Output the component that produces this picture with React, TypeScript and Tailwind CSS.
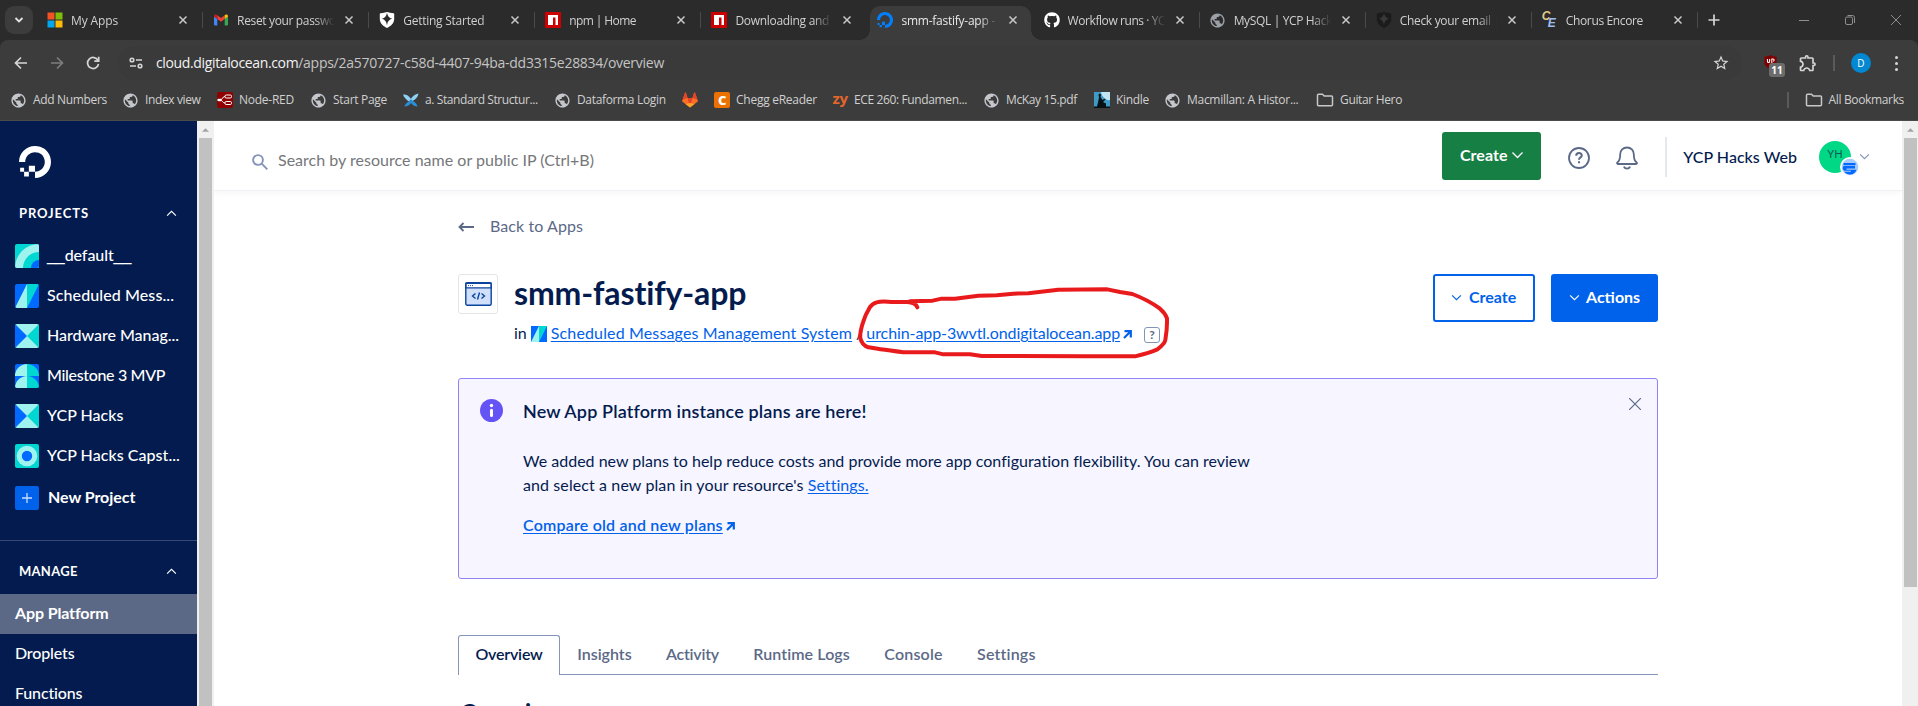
import type { ReactNode } from "react";
import { MdPublic, MdStarBorder, MdOutlineExtension } from "react-icons/md";
import { SiDigitalocean } from "react-icons/si";
import { FaGithub } from "react-icons/fa";

/* ---------- browser icons ---------- */

const Globe = ({ className = "text-[#c4c7cc]" }: { className?: string }) => (
  <MdPublic className={`-ml-px size-[17px] shrink-0 ${className}`} />
);

const Microsoft = () => (
  <svg viewBox="0 0 16 16" className="size-4">
    <path fill="#f35325" d="M0.5 0.5h7v7h-7z" />
    <path fill="#81bc06" d="M8.5 0.5h7v7h-7z" />
    <path fill="#05a6f0" d="M0.5 8.5h7v7h-7z" />
    <path fill="#ffba08" d="M8.5 8.5h7v7h-7z" />
  </svg>
);

const Gmail = () => (
  <svg viewBox="0 0 16 16" className="size-4">
    <path fill="#4285f4" d="M1 4.5 4.3 7v6.5H2A1 1 0 0 1 1 12.500z" />
    <path fill="#34a853" d="M15 4.500 11.700 7v6.500H14a1 1 0 0 0 1-1z" />
    <path fill="#ea4335" d="M4.300 3.300 8 6.100l3.700-2.800V7L8 9.800 4.300 7z" />
    <path fill="#c5221f" d="M1 4v.700L4.300 7V3.300l-.700-.500C2.500 2 1 2.700 1 4z" />
    <path fill="#fbbc04" d="M15 4v.700L11.700 7V3.300l.700-.500C13.500 2 15 2.700 15 4z" />
  </svg>
);

const Shield = ({ dim = false }: { dim?: boolean }) => (
  <svg viewBox="0 0 16 16" className="size-4">
    <path fill={dim ? "#1b1b1b" : "#ffffff"} d="M1.500 1.200C4 1.200 6.500.500 8 .100c1.500.400 4 1.100 6.500 1.100.500 0 .700.300.700.700V7c0 4-3.200 7.200-7.200 8.900C4 14.200.800 11 .800 7V1.900c0-.400.200-.700.700-.700z" />
    <path fill={dim ? "#383838" : "#2b2b2b"} d="M8 .800c.600 3.500 2 5.200 5.300 5.900C10 7.500 8.600 9.300 8 13.600 7.400 9.300 6 7.500 2.700 6.700 6 6 7.400 4.300 8 .800z" />
  </svg>
);

const Npm = () => (
  <svg viewBox="0 0 16 16" className="size-4">
    <path fill="#cc0000" d="M0 0h16v16H0z" />
    <path fill="#ffffff" d="M3 3h10v10h-2.500V5.500H8V13H3z" />
  </svg>
);

const Chorus = () => (
  <span className="relative size-4 font-['Liberation_Sans',sans-serif] text-[12px] leading-none font-bold italic">
    <span className="absolute -top-0.5 left-0 text-[#e3c98a]">C</span>
    <span className="absolute top-[5px] left-[6px] text-[#9dbdf2]">E</span>
  </span>
);

const Gitlab = () => (
  <svg viewBox="0 0 16 16" className="size-4">
    <path fill="#fc6d26" d="M8 15.500.500 9.800a1 1 0 0 1-.300-1.100L3 .800c.200-.500.700-.500.900 0L5.600 6h4.800L12.100.800c.200-.500.700-.500.900 0l2.800 7.900c.100.400 0 .900-.300 1.100z" />
    <path fill="#e24329" d="M8 15.500 5.600 6h4.800zM.600 7.400 3 .800c.200-.500.700-.500.900 0L5.600 6zM15.400 7.400 13 .800c-.200-.500-.700-.500-.9 0L10.400 6z" />
    <path fill="#fca326" d="M8 15.500 3.500 12 8 11l4.500 1z" />
  </svg>
);

const Chegg = () => (
  <span className="flex size-4 items-center justify-center rounded-[2px] bg-[#eb7100] font-['Open_Sans',sans-serif] text-[13px] leading-none font-extrabold text-white">
    C
  </span>
);

const Zy = () => (
  <span className="flex size-4 items-center justify-center pb-1 font-['Open_Sans',sans-serif] text-[15px] leading-none font-bold tracking-[-0.5px] text-[#e2662a]">
    zy
  </span>
);

const Kindle = () => (
  <svg viewBox="0 0 16 16" className="size-4">
    <path fill="#3d9bc6" d="M0 0h16v16H0z" />
    <path fill="#bfe5f2" d="M7 0h9v8C12 9 8 5 7 0z" />
    <path fill="#071013" d="M0 14.500h3l1-4 1-5L4.500 3C4.700 1.300 7 1.300 7 3l-.500 2 2 3L11 6.500l.500 1L9 10l3 1.500v3h4V16H0z" />
  </svg>
);

const Butterfly = () => (
  <svg viewBox="0 0 16 16" className="size-4">
    <path fill="#8fd0f5" d="M0 2.500c3-.500 5.500 1 8 4.300C10 4 12 2 15.500 1.500 15 5 12.500 7.500 9.500 9L8 7.500 6 9.500C3.500 8 1 5.500 0 2.500z" />
    <path fill="#2a8fd8" d="M8 7.500 10 9c2 1 4 3 4.500 5.500-3 0-5-1.500-6.500-3.500-1.500 2-3.500 3.500-6.500 3.500C2 12 4 10.500 6 9.500z" />
  </svg>
);

const Folder = () => (
  <svg viewBox="0 0 18 16" className="h-4 w-[18px] shrink-0" fill="none" stroke="#c7c7c7" strokeWidth="1.500">
    <path d="M1.500 3.200c0-.600.400-1 1-1h4l1.700 1.900h7.300c.600 0 1 .400 1 1v7.700c0 .600-.400 1-1 1h-13c-.600 0-1-.400-1-1z" />
  </svg>
);

const NodeRed = () => (
  <span className="flex size-4 items-center justify-center rounded-[2px] bg-[#8f0000]">
    <svg viewBox="0 0 16 16" className="size-4" fill="none" stroke="#ffffff" strokeWidth="1">
      <rect x="8" y="3" width="6.500" height="3" rx="1.200" />
      <rect x="8" y="9.500" width="6.500" height="3" rx="1.200" />
      <path d="M0 8h3c3 0 2-3.500 5-3.500M3 8c3 0 2 3 5 3" />
      <rect x="1" y="6.800" width="3.500" height="2.400" fill="#ffffff" stroke="none" />
    </svg>
  </span>
);

const Close = () => (
  <svg viewBox="0 0 10 10" className="size-[10px]" fill="none" stroke="#c9c9c9" strokeWidth="1.500">
    <path d="m1.500 1.500 7 7m0-7-7 7" />
  </svg>
);

/* ---------- browser chrome ---------- */

type TabInfo = { icon: ReactNode; title: string; tracking: string; divider?: boolean; active?: boolean };

const browserTabs: TabInfo[] = [
  { icon: <Microsoft />, title: "My Apps", tracking: "tracking-[-0.13px]", divider: true },
  { icon: <Gmail />, title: "Reset your passwo", tracking: "tracking-[-0.35px]", divider: true },
  { icon: <Shield />, title: "Getting Started", tracking: "tracking-[-0.25px]", divider: true },
  { icon: <Npm />, title: "npm | Home", tracking: "tracking-[-0.6px]", divider: true },
  { icon: <Npm />, title: "Downloading and", tracking: "tracking-[-0.3px]" },
  { icon: <SiDigitalocean className="size-4 text-[#0080ff]" />, title: "smm-fastify-app -", tracking: "tracking-[-0.25px]", active: true },
  { icon: <FaGithub className="size-4 text-white" />, title: "Workflow runs · YC", tracking: "tracking-[-0.42px]", divider: true },
  { icon: <Globe className="text-[#9aa0a6]" />, title: "MySQL | YCP Hack", tracking: "tracking-[-0.35px]", divider: true },
  { icon: <Shield dim />, title: "Check your email |", tracking: "tracking-[-0.32px]", divider: true },
  { icon: <Chorus />, title: "Chorus Encore", tracking: "tracking-[-0.37px]", divider: true },
];

function BrowserTab({ icon, title, tracking, divider, active }: TabInfo) {
  return (
    <div className="relative flex h-10 w-[166.1px] shrink-0 items-center pl-[10px]">
      {active && (
        <div className="absolute inset-x-[3px] top-[6px] bottom-0 rounded-t-[10px] bg-[#3c3c3c]">
          <span className="absolute bottom-0 -left-[10px] size-[10px] bg-[radial-gradient(circle_at_0_0,#2b2b2b_9.500px,#3c3c3c_10px)]" />
          <span className="absolute -right-[10px] bottom-0 size-[10px] bg-[radial-gradient(circle_at_100%_0,#2b2b2b_9.500px,#3c3c3c_10px)]" />
        </div>
      )}
      <span className="relative flex w-4 shrink-0">{icon}</span>
      <span className={`relative mt-px ml-2 w-[101px] whitespace-nowrap leading-4 [mask-image:linear-gradient(to_right,#000_78px,transparent_97px)] ${tracking} ${active ? "text-[#e8e8e8]" : "text-[#d0d0d0]"}`}>
        {title}
      </span>
      <span className="relative ml-[6px]">
        <Close />
      </span>
      {divider && <span className="ml-auto h-4 w-px bg-[#4a4a4a]" />}
    </div>
  );
}

type Bookmark = { icon: ReactNode; label?: string; cls: string };

const bookmarks: Bookmark[] = [
  { icon: <Globe />, label: "Add Numbers", cls: "w-[112px] tracking-[-0.33px]" },
  { icon: <Globe />, label: "Index view", cls: "w-[94px] tracking-[-0.37px]" },
  { icon: <NodeRed />, label: "Node-RED", cls: "w-[94px] tracking-[-0.25px]" },
  { icon: <Globe />, label: "Start Page", cls: "w-[92px] tracking-[-0.3px]" },
  { icon: <Butterfly />, label: "a. Standard Structur...", cls: "w-[152px] tracking-[-0.41px]" },
  { icon: <Globe />, label: "Dataforma Login", cls: "w-[127px] tracking-[-0.34px]" },
  { icon: <Gitlab />, cls: "w-[32px]" },
  { icon: <Chegg />, label: "Chegg eReader", cls: "w-[118px] tracking-[-0.26px]" },
  { icon: <Zy />, label: "ECE 260: Fundamen...", cls: "w-[152px] tracking-[-0.37px]" },
  { icon: <Globe />, label: "McKay 15.pdf", cls: "w-[110px] tracking-[-0.36px]" },
  { icon: <Kindle />, label: "Kindle", cls: "w-[71px] tracking-[-0.31px]" },
  { icon: <Globe />, label: "Macmillan: A Histor...", cls: "w-[151px] tracking-[-0.29px]" },
];

function BrowserChrome() {
  return (
    <div className="bg-[#2b2b2b] font-['Open_Sans','Noto_Sans',sans-serif] text-[12px] text-[#d0d0d0]">
      <div className="flex h-10 items-center">
        <div className="mr-1 ml-[5px] flex h-7 w-7 items-center justify-center rounded-[9px] bg-[#3c3c3c]">
          <svg viewBox="0 0 10 6" className="h-[6px] w-[10px]" fill="none" stroke="#e3e3e3" strokeWidth="1.800">
            <path d="m1.500 1 3.500 3.500L8.500 1" />
          </svg>
        </div>
        {browserTabs.map((t) => (
          <BrowserTab key={t.title} {...t} />
        ))}
        <svg viewBox="0 0 12 12" className="ml-[10px] size-3" fill="none" stroke="#d6d6d6" strokeWidth="1.700">
          <path d="M6 .500v11M.500 6h11" />
        </svg>
        <div className="mr-[17px] ml-auto flex items-center gap-9">
          <svg viewBox="0 0 10 10" className="size-[10px]" stroke="#8f8f8f">
            <path d="M0 5.500h10" />
          </svg>
          <svg viewBox="0 0 10 10" className="size-[10px]" fill="none" stroke="#8f8f8f">
            <rect x=".5" y="2" width="7" height="7.500" rx="1.500" />
            <path d="M2.500.500h5a2 2 0 0 1 2 2V8" />
          </svg>
          <svg viewBox="0 0 10 10" className="size-[10px]" stroke="#8f8f8f">
            <path d="m0 0 10 10M10 0 0 10" />
          </svg>
        </div>
      </div>

      <div className="h-[81px] rounded-t-[8px] border-b border-[#4a4a4a] bg-[#3c3c3c]">
        <div className="flex h-[46px] items-center">
          <svg viewBox="0 0 14 14" className="ml-[14px] size-[14px]" fill="none" stroke="#d6d6d6" strokeWidth="1.700">
            <path d="M13 7H1.500M7 1.500 1.500 7 7 12.500" />
          </svg>
          <svg viewBox="0 0 14 14" className="ml-[22px] size-[14px]" fill="none" stroke="#7d7d7d" strokeWidth="1.700">
            <path d="M1 7h11.500M7 1.500 12.500 7 7 12.500" />
          </svg>
          <svg viewBox="0 0 14 14" className="ml-[22px] size-[14px]" fill="none" stroke="#d6d6d6" strokeWidth="1.700">
            <path d="M12 4.500A5.500 5.500 0 1 0 12.500 8" />
            <path d="M12.700.800v4.400H8.300" />
          </svg>
          <div className="ml-[18px] flex h-[34px] w-[1624px] items-center rounded-full bg-[#3a3a3a]">
            <svg viewBox="0 0 14 12" className="ml-[11px] h-3 w-[14px]" fill="none" stroke="#d6d6d6" strokeWidth="1.600">
              <circle cx="3" cy="3" r="1.800" />
              <path d="M7 3h6M1 9h6" />
              <circle cx="11" cy="9" r="1.800" />
            </svg>
            <span className="ml-[13px] text-[14px] leading-5 tracking-[-0.275px] text-[#c4c4c4]">
              <span className="tracking-[-0.36px] text-[#f2f2f2]">cloud.digitalocean.com</span>
              /apps/2a570727-c58d-4407-94ba-dd3315e28834/overview
            </span>
            <MdStarBorder className="mr-3 ml-auto size-[18px] text-[#d6d6d6]" />
          </div>
          <div className="relative ml-[22px] flex h-[18px] w-[14px]">
            <svg viewBox="0 0 14 16" className="mt-px h-[14px] w-[13px]">
              <path fill="#800000" d="M7 0c2 1.300 4 1.800 7 2v6c0 4-3 6.500-7 8-4-1.500-7-4-7-8V2c3-.2 5-.7 7-2z" />
              <path fill="none" stroke="#ffffff" strokeWidth="1.200" d="M3.500 4.500v3c0 1.500 2.500 1.500 2.500 0v-3M8.500 9V4.500h1.500c1.500 0 1.500 2.500 0 2.500" />
            </svg>
            <span className="absolute top-[9px] left-[5px] flex h-[14px] w-4 items-center justify-center rounded-[3px] bg-[#6c6c6c] text-[10px] font-bold text-white">
              11
            </span>
          </div>
          <MdOutlineExtension className="ml-[20px] size-[20px] text-[#d6d6d6]" />
          <span className="ml-[15px] h-4 w-[2px] bg-[#5a5a5a]" />
          <span className="ml-4 flex size-5 items-center justify-center rounded-full bg-[#0288d1] text-[10px] text-white">D</span>
          <span className="ml-[24px] flex flex-col gap-[3px]">
            <i className="size-[3px] rounded-full bg-[#d6d6d6]" />
            <i className="size-[3px] rounded-full bg-[#d6d6d6]" />
            <i className="size-[3px] rounded-full bg-[#d6d6d6]" />
          </span>
        </div>
        <div className="flex h-[28px] items-center pl-[11px]">
          {bookmarks.map((b) => (
            <div key={b.label ?? "gitlab"} className={`flex shrink-0 items-center gap-[6px] whitespace-nowrap ${b.cls}`}>
              <span className="flex w-4 shrink-0">{b.icon}</span>
              {b.label}
            </div>
          ))}
          <div className="flex items-center gap-[6px] tracking-[-0.34px]">
            <Folder />
            Guitar Hero
          </div>
          <span className="ml-auto h-4 w-[2px] bg-[#5a5a5a]" />
          <div className="mr-[14px] ml-4 flex items-center gap-[6px] tracking-[-0.35px]">
            <Folder />
            All Bookmarks
          </div>
        </div>
      </div>
    </div>
  );
}

/* ---------- page parts ---------- */

const Chevron = ({ className = "", size = "h-[7px] w-[11px]", up = false }: { className?: string; size?: string; up?: boolean }) => (
  <svg viewBox="0 0 12 8" className={`shrink-0 ${size} ${className}`} fill="none" stroke="currentColor" strokeWidth="1.300">
    <path d={up ? "M1 6.500 6 1.500l5 5" : "m1 1.500 5 5 5-5"} />
  </svg>
);

const ExternalArrow = () => (
  <svg viewBox="0 0 9 9" className="mt-[3px] size-[9px]" fill="none" stroke="#0061eb" strokeWidth="2.200">
    <path d="M1.500 1.200h6.300v6.300M7.500 1.500 1 8" />
  </svg>
);

function Scrollbar({ thumb }: { thumb: string }) {
  return (
    <div className="flex shrink-0 flex-col items-center">
      <svg viewBox="0 0 8 4" className="mt-[7px] mb-[6px] h-1 w-[7px]">
        <path fill="#a3a3a3" d="M0 4 4 0l4 4z" />
      </svg>
      <div className={`w-[13px] bg-[#c1c1c1] ${thumb}`} />
    </div>
  );
}

const Tile = ({ children, bg, className = "size-6 rounded-[2px]" }: { children: ReactNode; bg: string; className?: string }) => (
  <svg viewBox="0 0 24 24" className={`shrink-0 ${className}`}>
    <path fill={bg} d="M0 0h24v24H0z" />
    {children}
  </svg>
);

const Arcs = () => (
  <Tile bg="#00d7d2">
    <circle cx="24" cy="24" r="24" fill="#9ff3ef" />
    <circle cx="24" cy="24" r="16" fill="#00d7d2" />
    <circle cx="24" cy="24" r="8" fill="#0069ff" />
  </Tile>
);
const Slashes = ({ className }: { className?: string }) => (
  <Tile bg="#0069ff" className={className}>
    <path fill="#9ff3ef" d="M0 24 12 0v24z" />
    <path fill="#00d7d2" d="M12 0h12L12 24z" />
  </Tile>
);
const Hourglass = () => (
  <Tile bg="#9ff3ef">
    <path fill="#0069ff" d="M0 0l12 12L0 24z" />
    <path fill="#00d7d2" d="M24 0 12 12l12 12z" />
  </Tile>
);
const Domes = () => (
  <Tile bg="#0069ff">
    <path fill="#9ff3ef" d="M12 0v12H0A12 12 0 0 1 12 0zM12 12v12H0a12 12 0 0 1 12-12z" />
    <path fill="#00d7d2" d="M12 0v12h12A12 12 0 0 0 12 0zM12 12v12h12a12 12 0 0 0-12-12z" />
  </Tile>
);
const Target = () => (
  <Tile bg="#00d7d2">
    <circle cx="12" cy="12" r="10.300" fill="#9ff3ef" />
    <circle cx="12" cy="12" r="5.200" fill="#0069ff" />
  </Tile>
);

const projects = [
  { icon: <Arcs />, name: "__default__", tracking: "tracking-[-0.08px]" },
  { icon: <Slashes />, name: "Scheduled Mess...", tracking: "tracking-[0.1px]" },
  { icon: <Hourglass />, name: "Hardware Manag...", tracking: "tracking-[-0.03px]" },
  { icon: <Domes />, name: "Milestone 3 MVP", tracking: "tracking-[-0.33px]" },
  { icon: <Hourglass />, name: "YCP Hacks", tracking: "tracking-[0.02px]" },
  { icon: <Target />, name: "YCP Hacks Capst...", tracking: "tracking-[0.05px]" },
];

/* Underscore runs are set in a face whose underscores join into one line. */
function ProjectName({ name }: { name: string }) {
  const parts = name.split(/(_+)/).filter(Boolean);
  return (
    <>
      {parts.map((part, i) => (
        <span key={i} className={part.startsWith("_") ? "font-['Liberation_Sans',sans-serif]" : "font-['Lato',sans-serif]"}>
          {part}
        </span>
      ))}
    </>
  );
}

function Sidebar() {
  return (
    <aside className="flex w-[197px] shrink-0 flex-col bg-[#031b4e] text-white">
      <SiDigitalocean className="mt-[25px] ml-[19px] size-8 shrink-0" />
      <div className="mt-6 flex h-6 shrink-0 items-center justify-between pr-5 pl-[19px] text-[13px] font-bold tracking-[0.9px]">
        PROJECTS
        <Chevron up className="-mt-px" />
      </div>
      <div className="mt-[10px] shrink-0 font-medium">
        {projects.map((p) => (
          <div key={p.name} className="flex h-10 items-center gap-2 pl-[15px]">
            {p.icon}
            <span className={`-mt-0.5 whitespace-nowrap ${p.tracking}`}>
              <ProjectName name={p.name} />
            </span>
          </div>
        ))}
      </div>
      <div className="mt-0.5 flex h-10 shrink-0 items-center gap-[9px] pl-[15px] font-bold tracking-[-0.05px]">
        <svg viewBox="0 0 24 24" className="size-6 rounded-[2px] bg-[#0061eb]" stroke="#c9deff" strokeWidth="1.300">
          <path d="M12 7v10M7 12h10" />
        </svg>
        <span className="-mt-0.5">New Project</span>
      </div>
      <div className="mt-[22px] h-px shrink-0 bg-[#35486f]" />
      <div className="mt-[19px] flex h-6 shrink-0 items-center justify-between pr-5 pl-[19px] text-[13px] font-bold tracking-[0.28px]">
        MANAGE
        <Chevron up className="-mt-px" />
      </div>
      <div className="mt-[10px] flex h-10 shrink-0 items-center bg-[#5b6987] pb-0.5 pl-[15px] font-bold tracking-[-0.13px]">App Platform</div>
      <div className="flex h-10 shrink-0 items-center pb-0.5 pl-[15px] font-medium tracking-[-0.15px]">Droplets</div>
      <div className="flex h-10 shrink-0 items-center pb-0.5 pl-[15px] font-medium tracking-[-0.15px]">Functions</div>
    </aside>
  );
}

function Header() {
  return (
    <header className="flex h-[70px] shrink-0 items-center border-b border-[#f0f1f3] shadow-[0_2px_6px_rgba(3,27,78,0.04)]">
      <svg viewBox="0 0 16 16" className="mt-3 ml-[38px] size-4" fill="none" stroke="#8494b8" strokeWidth="1.900">
        <circle cx="6" cy="6" r="4.900" />
        <path d="m9.700 9.700 5.600 5.600" />
      </svg>
      <span className="mt-2 ml-[10px] tracking-[0.02px] text-[#76777a]">Search by resource name or public IP (Ctrl+B)</span>
      <button className="ml-auto flex h-12 w-[99px] items-center justify-center gap-[3px] rounded-[3px] bg-[#157f44] pb-[2px] font-bold tracking-[0.1px] text-white">
        Create
        <Chevron size="h-2 w-[13px]" />
      </button>
      <svg viewBox="0 0 22 22" className="mt-[5px] ml-[27px] size-[22px]" fill="none" stroke="#5b6987" strokeWidth="1.800">
        <circle cx="11" cy="11" r="10" />
        <path strokeWidth="2" d="M8.200 8.700c0-3.500 5.600-3.500 5.600-.300 0 2-2.800 2-2.800 4.300M11 14.300v2" />
      </svg>
      <svg viewBox="0 0 22 24" className="mt-[5px] ml-[26px] h-6 w-[22px]" fill="none" stroke="#5b6987" strokeWidth="1.800">
        <path strokeLinejoin="round" d="M11 1.500c-4 0-6.800 3-6.800 6.800 0 4.500-.700 6.700-2.800 8.200-.600.600-.300 1.500.500 1.500h18.200c.800 0 1.100-.900.500-1.500-2.100-1.500-2.800-3.700-2.800-8.200C17.800 4.500 15 1.500 11 1.500z" />
        <path d="M8 20.500c.700 2.700 5.300 2.700 6 0" />
      </svg>
      <span className="mt-0.5 ml-[27px] h-10 w-[2px] bg-[#e5e8ed]" />
      <span className="ml-4 pt-0.5 font-medium tracking-[0.03px] text-[#031b4e]">YCP Hacks Web</span>
      <div className="relative mt-0.5 ml-[22px] flex size-8 items-center justify-center rounded-full bg-[#00d886] pb-1 text-[11px] text-[#0a5b57]">
        YH
        <svg viewBox="0 0 20 20" className="absolute top-4 left-[21px] size-5">
          <circle cx="10" cy="10" r="10" fill="#ffffff" />
          <circle cx="10" cy="10" r="8.300" fill="#a9cdfb" />
          <path fill="#0069ff" d="M3.500 6h12v2.200h-12zM3.500 9H15v2.500H7c-1 0-1 1.300 0 1.300h9.500c-1 3-3.500 4.800-6.500 4.800-2.500 0-4.500-1-5.700-2.800H11v-1H5c-2 0-3-3-1.500-4.800z" />
        </svg>
      </div>
      <Chevron className="mt-px mr-[32px] ml-2 text-[#8494b8]" />
    </header>
  );
}

function AppIcon() {
  return (
    <div className="flex size-10 shrink-0 items-center justify-center rounded-[3px] border border-[#e5e5e8]">
      <svg viewBox="0 0 27 24" className="h-6 w-[27px]" fill="none" stroke="#0a43a0" strokeWidth="1.400">
        <rect x=".8" y=".8" width="25.400" height="22.400" rx="1.500" fill="#d0e0fb" />
        <path fill="#ffffff" d="M1 1.200h25v4.700H1z" />
        <path strokeWidth=".9" strokeDasharray="1 1" d="M3 3.600h6" />
        <path d="m10.500 11.500-3 2.500 3 2.500M16.500 11.500l3 2.500-3 2.500M14.500 10.500l-2 7" />
      </svg>
    </div>
  );
}

const pageTabs = [
  { name: "Insights", cls: "tracking-normal" },
  { name: "Activity", cls: "tracking-[-0.25px]" },
  { name: "Runtime Logs", cls: "tracking-[0.1px]" },
  { name: "Console", cls: "tracking-[0.19px]" },
  { name: "Settings", cls: "tracking-[0.17px]" },
];

function AppOverview() {
  return (
    <div className="ml-[244px] flex w-[1200px] flex-col text-[#031b4e]">
      <div className="mt-[23px] flex h-6 items-center text-[#5b6987]">
        <svg viewBox="0 0 16 10" className="mt-0.5 h-[10px] w-4" fill="none" stroke="currentColor" strokeWidth="1.800">
          <path d="M16 5H1.500M5.500 1l-4 4 4 4" />
        </svg>
        <span className="ml-4 tracking-[0.08px]">Back to Apps</span>
      </div>

      <div className="mt-9 flex items-start">
        <AppIcon />
        <div className="ml-4">
          <h1 className="-mt-px text-[32px] leading-10 font-bold tracking-[-0.13px]">smm-fastify-app</h1>
          <div className="mt-2 flex h-6 items-center whitespace-nowrap">
            in
            <Slashes className="mt-0.5 ml-1 size-4" />
            <a className="ml-1 tracking-[0.14px] text-[#0061eb] underline underline-offset-2">Scheduled Messages Management System</a>
            <span className="ml-1">/</span>
            <a className="ml-[3px] tracking-[-0.09px] text-[#0061eb] underline underline-offset-2">urchin-app-3wvtl.ondigitalocean.app</a>
            <span className="ml-[3px]">
              <ExternalArrow />
            </span>
            <span className="mt-1 ml-3 flex size-4 items-center justify-center rounded-[3px] border-[1.500px] border-[#8494b8] text-[12px] leading-none font-bold text-[#5b6987]">
              ?
            </span>
          </div>
        </div>
        <button className="ml-auto flex h-12 w-[102px] items-center gap-[7px] rounded-[3px] border-2 border-[#0061eb] pb-0.5 pl-4 font-bold text-[#0061eb]">
          <Chevron />
          Create
        </button>
        <button className="ml-4 flex h-12 w-[107px] items-center gap-[6px] rounded-[3px] bg-[#0061eb] pb-0.5 pl-[18px] font-bold text-white">
          <Chevron />
          Actions
        </button>
      </div>

      <section className="mt-[33px] flex h-[201px] items-start rounded-[3px] border border-[#8f83f5] bg-[#f7f5ff] pt-5 pl-[21px]">
        <svg viewBox="0 0 23 23" className="size-[23px] shrink-0">
          <circle cx="11.500" cy="11.500" r="11.500" fill="#6554f5" />
          <circle cx="11.500" cy="6.500" r="1.700" fill="#ffffff" />
          <path stroke="#ffffff" strokeWidth="3" strokeLinecap="round" d="M11.500 11.300v5.200" />
        </svg>
        <div className="ml-5 whitespace-nowrap">
          <h2 className="text-[18px] leading-6 font-semibold tracking-[0.14px]">New App Platform instance plans are here!</h2>
          <p className="mt-[26px] leading-6">
            <span className="tracking-[0.01px]">We added new plans to help reduce costs and provide more app configuration flexibility. You can review</span>
            <br />
            <span className="tracking-[0.1px]">and select a new plan in your resource's </span>
            <a className="tracking-[0.05px] text-[#0061eb] underline underline-offset-2">Settings.</a>
          </p>
          <div className="mt-4 flex items-center gap-[3px]">
            <a className="leading-6 font-semibold tracking-[0.2px] text-[#0061eb] underline underline-offset-2">Compare old and new plans</a>
            <ExternalArrow />
          </div>
        </div>
        <svg viewBox="0 0 12 12" className="-mt-px mr-4 ml-auto size-3" stroke="#5b6987" strokeWidth="1.200">
          <path d="m0 0 12 12M12 0 0 12" />
        </svg>
      </section>

      <nav className="mt-14 flex h-10 shrink-0 font-semibold text-[#5b6987]">
        <div className="flex w-[102px] items-center justify-center rounded-t-[3px] border border-b-0 border-[#8494b8] pb-[3px] tracking-[-0.2px] text-[#031b4e]">Overview</div>
        <div className="flex grow border-b border-[#8494b8]">
          {pageTabs.map((t) => (
            <div key={t.name} className={`flex items-center px-[17.200px] pb-px ${t.cls}`}>
              {t.name}
            </div>
          ))}
        </div>
      </nav>

      <h2 className="mt-[22px] pl-0.5 text-[24px] leading-8 font-bold tracking-[-0.2px]">Overview</h2>
    </div>
  );
}

/* Hand-drawn marker loop around the live app link. */
const MarkerLoop = () => (
  <svg viewBox="0 0 1200 360" className="pointer-events-none absolute top-[260px] left-[820px] h-[120px] w-[400px]" fill="none" stroke="#e81a1c" strokeWidth="12" strokeLinecap="round" strokeLinejoin="round">
    <path d="M292 142Q288 128 262 126H215Q185 123 170 127Q158 130 150 141Q135 166 129 187Q119 218 121 235Q126 256 145 262Q165 266 250 277L345 277L370 283L450 283L485 288L800 289H945Q985 280 1012 268Q1034 252 1036 240Q1042 205 1041 175Q1036 160 1020 146Q985 120 937 102L900 96L862 88L715 89L625 100L580 101L530 106L475 107L405 116L365 116L338 122L270 124" />
  </svg>
);

export default function App() {
  return (
    <div className="relative flex h-[706px] w-full flex-col overflow-hidden bg-white font-['Lato','Open_Sans',sans-serif] text-[16px]">
      <BrowserChrome />
      <div className="flex min-h-0 grow">
        <Sidebar />
        <div className="flex w-[17px] shrink-0 bg-[#f0f0f0] pl-0.5">
          <Scrollbar thumb="grow" />
        </div>
        <main className="flex min-w-0 grow flex-col overflow-hidden">
          <Header />
          <AppOverview />
        </main>
        <div className="flex w-4 shrink-0 bg-[#f0f0f0] pl-0.5">
          <Scrollbar thumb="h-[449px]" />
        </div>
      </div>
      <MarkerLoop />
    </div>
  );
}
